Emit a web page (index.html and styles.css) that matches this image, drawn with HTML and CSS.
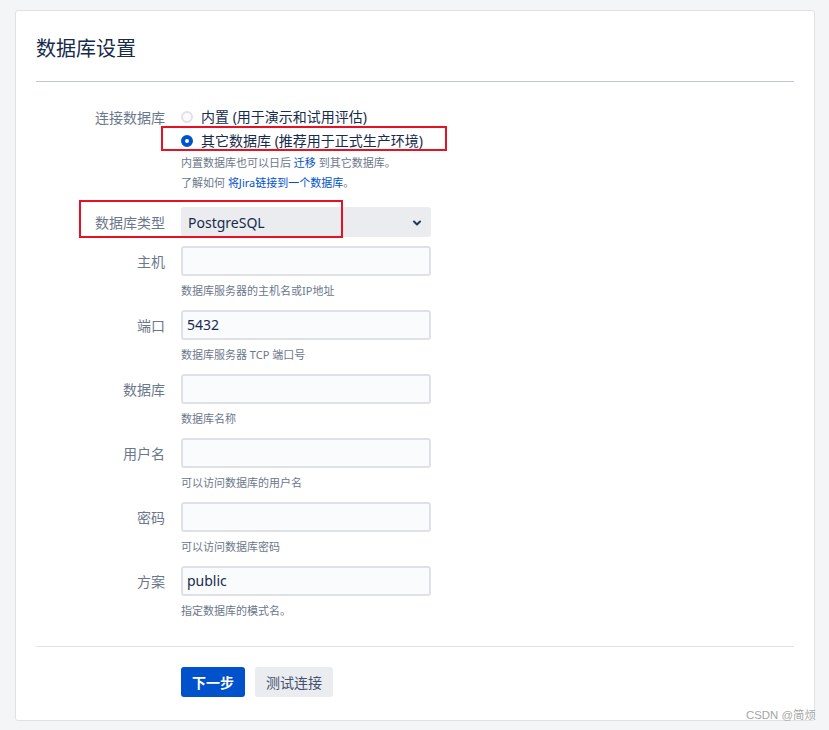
FILE: index.html
```html
<!DOCTYPE html>
<html lang="zh-CN">
<head>
<meta charset="utf-8">
<title>数据库设置</title>
<link rel="stylesheet" href="styles.css">
</head>
<body>
<div class="page">
  <div class="card">
    <h1 class="title">数据库设置</h1>
    <form class="form">
      <div class="row row-radio">
        <div class="label label-radio">连接数据库</div>
        <div class="field">
          <div class="radio"><span class="circle"></span><span class="radio-text">内置 (用于演示和试用评估)</span></div>
          <div class="radio"><span class="circle circle-on"></span><span class="radio-text">其它数据库 (推荐用于正式生产环境)</span></div>
          <div class="hint hint-radio">内置数据库也可以日后 <span class="link">迁移</span> 到其它数据库。</div>
          <div class="hint hint-radio">了解如何 <span class="link">将Jira链接到一个数据库</span>。</div>
        </div>
      </div>
      <div class="row row-select">
        <div class="label">数据库类型</div>
        <div class="field">
          <div class="select"><span class="value">PostgreSQL</span>
            <svg class="chevron" width="10" height="8" viewBox="0 0 10 8"><path d="M2 2.5 L5 5.5 L8 2.5" fill="none" stroke="#253858" stroke-width="2" stroke-linecap="round" stroke-linejoin="round"/></svg>
          </div>
        </div>
      </div>
      <div class="row">
        <div class="label">主机</div>
        <div class="field">
          <div class="input"></div>
          <div class="hint">数据库服务器的主机名或IP地址</div>
        </div>
      </div>
      <div class="row">
        <div class="label">端口</div>
        <div class="field">
          <div class="input"><span class="value">5432</span></div>
          <div class="hint">数据库服务器 TCP 端口号</div>
        </div>
      </div>
      <div class="row">
        <div class="label">数据库</div>
        <div class="field">
          <div class="input"></div>
          <div class="hint">数据库名称</div>
        </div>
      </div>
      <div class="row">
        <div class="label">用户名</div>
        <div class="field">
          <div class="input"></div>
          <div class="hint">可以访问数据库的用户名</div>
        </div>
      </div>
      <div class="row">
        <div class="label">密码</div>
        <div class="field">
          <div class="input"></div>
          <div class="hint">可以访问数据库密码</div>
        </div>
      </div>
      <div class="row">
        <div class="label">方案</div>
        <div class="field">
          <div class="input"><span class="value">public</span></div>
          <div class="hint">指定数据库的模式名。</div>
        </div>
      </div>
    </form>
    <div class="footer">
      <span class="btn btn-primary">下一步</span>
      <span class="btn btn-secondary">测试连接</span>
    </div>
  </div>
  <div class="mark mark-radio"></div>
  <div class="mark mark-type"></div>
  <div class="watermark">CSDN @简烦</div>
</div>
</body>
</html>
```

FILE: styles.css
```css
* { box-sizing: border-box; }
html, body {
  margin: 0;
  padding: 0;
  background: #f4f5f7;
}
body {
  font-family: "Noto Sans", "Noto Sans CJK SC", sans-serif;
  color: #172b4d;
  font-size: 14px;
}
.page {
  position: relative;
  width: 829px;
  height: 730px;
  padding: 10px 0 0 15px;
}
.card {
  width: 800px;
  height: 711px;
  background: #ffffff;
  border: 1px solid #dfe1e6;
  border-radius: 3px;
  padding: 0 20px;
}
.title {
  margin: 0;
  padding: 23px 0 19px;
  font-size: 20px;
  line-height: 28px;
  font-weight: 400;
  font-family: "Noto Sans CJK SC", sans-serif;
  color: #172b4d;
  border-bottom: 1px solid #c1c7d0;
}
.form {
  margin: 0;
  padding-top: 23px;
}
.row {
  display: flex;
  margin-bottom: 11px;
}
.row-radio { margin-bottom: 14px; }
.row-select { margin-bottom: 9px; }
.label {
  width: 145px;
  padding-right: 16px;
  text-align: right;
  color: #6b778c;
  font-family: "Noto Sans CJK SC", sans-serif;
  font-size: 14px;
  line-height: 30px;
  flex-shrink: 0;
}
.label-radio { line-height: 24px; }
.field {
  width: 250px;
}
.radio {
  display: flex;
  align-items: center;
  height: 24px;
}
.radio-text {
  margin-left: 8px;
  font-size: 14px;
  line-height: 24px;
  color: #172b4d;
}
.circle {
  width: 12px;
  height: 12px;
  border-radius: 50%;
  border: 2px solid #dfe1e6;
  background: #fafbfc;
  flex-shrink: 0;
}
.circle-on {
  border: 4px solid #0052cc;
  background: #ffffff;
}
.hint {
  font-size: 11px;
  line-height: 16px;
  color: #6b778c;
  margin-top: 7px;
  white-space: nowrap;
}
.hint-radio {
  margin-top: 0;
  line-height: 20px;
}
.link { color: #0052cc; }
.input {
  height: 30px;
  width: 250px;
  border: 2px solid #dfe1e6;
  border-radius: 3px;
  background: #fafbfc;
  padding: 0 4px;
  line-height: 26px;
  font-size: 14px;
  color: #172b4d;
}
.select {
  height: 30px;
  width: 250px;
  border-radius: 3px;
  background: #ebecf0;
  padding: 0 9px 0 7px;
  display: flex;
  align-items: center;
  justify-content: space-between;
  font-size: 14px;
  color: #172b4d;
}
.chevron { display: block; margin-top: 1px; }
.footer {
  margin-top: 27px;
  border-top: 1px solid #dfe1e6;
  padding: 20px 0 0 145px;
  display: flex;
  gap: 10px;
}
.btn {
  height: 30px;
  line-height: 30px;
  padding: 0 11px;
  border-radius: 3px;
  font-size: 14px;
  font-family: "Noto Sans CJK SC", sans-serif;
}
.btn-primary {
  background: #0052cc;
  color: #ffffff;
  font-weight: 700;
}
.btn-secondary {
  background: #ebecf0;
  color: #42526e;
}
.mark {
  position: absolute;
  border: 2px solid #e81123;
}
.mark-radio {
  left: 161px;
  top: 126px;
  width: 286px;
  height: 25px;
}
.mark-type {
  left: 79px;
  top: 200px;
  width: 264px;
  height: 38px;
}
.watermark {
  position: absolute;
  left: 746px;
  top: 707px;
  font-size: 11.4px;
  line-height: 16px;
  color: #a5a5a5;
  font-family: "Liberation Sans", "Noto Sans CJK SC", sans-serif;
  white-space: nowrap;
}
```
